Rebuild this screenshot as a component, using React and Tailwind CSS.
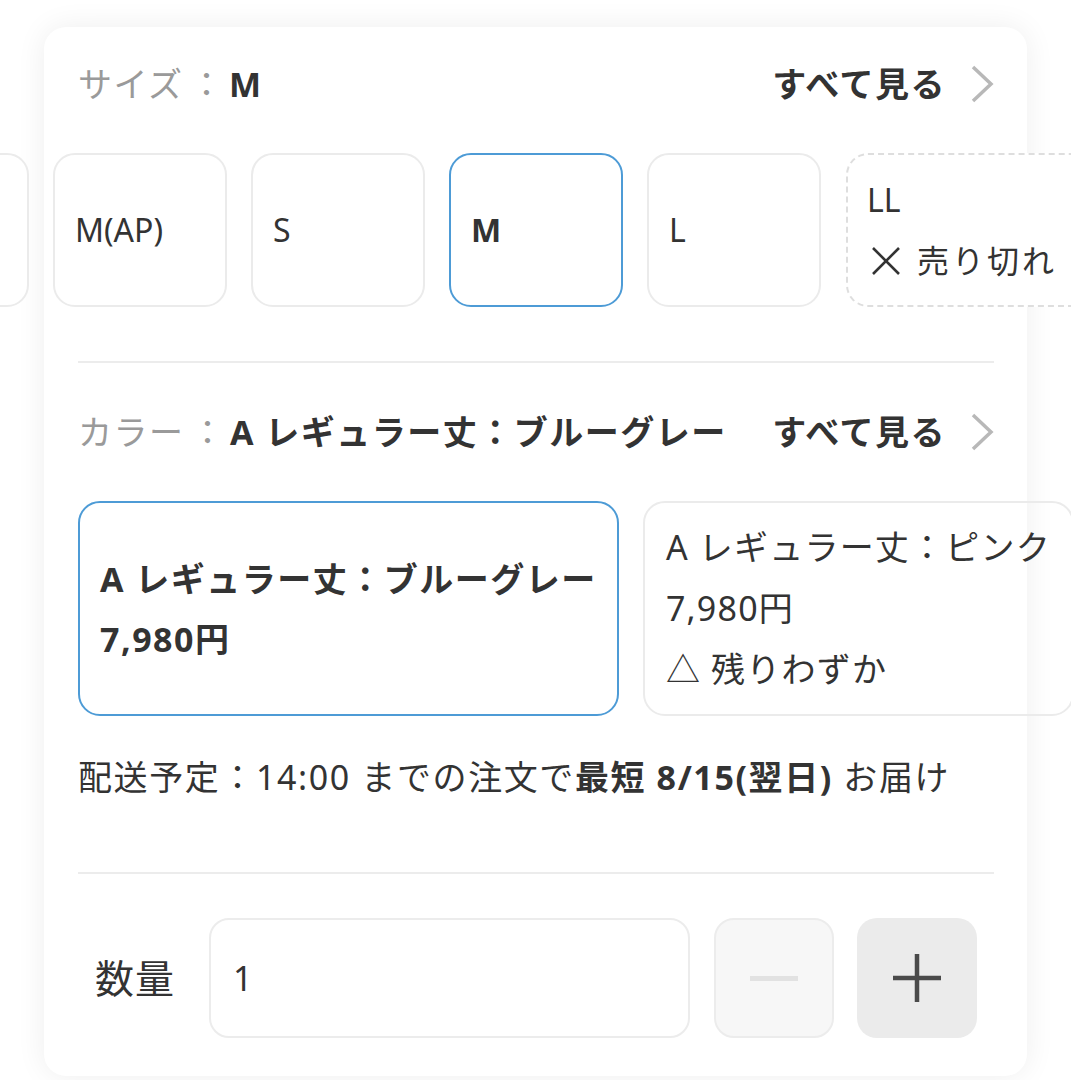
import React, { useState } from "react";

const sizes = [
  { label: "SS" },
  { label: "M(AP)" },
  { label: "S" },
  { label: "M" },
  { label: "L" },
];

const Chevron = () => (
  <svg width="24" height="38" viewBox="0 0 24 38" className="ml-[24px]">
    <polyline
      points="3,2 21,19 3,36"
      fill="none"
      stroke="#b8b8b8"
      strokeWidth="3.5"
    />
  </svg>
);

const SeeAll = () => (
  <div className="flex items-center font-bold text-[#333] tracking-[1.5px]">
    すべて見る
    <Chevron />
  </div>
);

const Cross = () => (
  <svg width="30" height="30" viewBox="0 0 30 30" className="mr-[16px] ml-[4px]">
    <path d="M2 2L28 28M28 2L2 28" stroke="#333" strokeWidth="2.6" />
  </svg>
);

export default function App() {
  const [size, setSize] = useState("M");
  const [qty, setQty] = useState(1);

  return (
    <div
      className="min-h-screen w-full overflow-hidden bg-white pt-[27px] pl-[44px]"
      style={{ fontFamily: '"Noto Sans", "Noto Sans CJK JP", sans-serif' }}
    >
      <div className="w-[983px] rounded-[22px] bg-white pl-[34px] pr-[33px] pt-[33px] pb-[38px] text-[34px] text-[#333] shadow-[0_0_30px_rgba(0,0,0,0.07)]">
        {/* Size header */}
        <div className="flex h-[48px] items-center justify-between">
          <div className="flex items-center tracking-[1.5px]">
            <span className="text-[#9a9a9a]">サイズ</span>
            <span className="ml-[6px] text-[#9a9a9a]">：</span>
            <span className="ml-[4px] font-bold">{size}</span>
          </div>
          <SeeAll />
        </div>

        {/* Size chips */}
        <div className="mt-[45px] -ml-[223px] flex w-max gap-[24px]">
          {sizes.map((s) => (
            <button
              key={s.label}
              onClick={() => setSize(s.label)}
              className={
                size === s.label
                  ? "flex h-[154px] w-[174px] items-center rounded-[22px] border-[2.5px] border-[#4d9bd6] bg-white pl-[20px] text-[32px] font-bold"
                  : "flex h-[154px] w-[174px] items-center rounded-[22px] border-2 border-[#ebebeb] bg-white pl-[20px] text-[32px]"
              }
            >
              {s.label}
            </button>
          ))}
          <div className="ml-[1px] flex h-[154px] w-[260px] flex-col justify-center rounded-[22px] border-2 border-dashed border-[#dedede] bg-white pl-[19px] text-[32px] leading-[61px]">
            <span>LL</span>
            <span className="flex items-center tracking-[3px]">
              <Cross />
              売り切れ
            </span>
          </div>
        </div>

        <div className="mt-[54px] h-[2px] bg-[#ececec]" />

        {/* Color header */}
        <div className="mt-[45px] flex h-[48px] items-center justify-between">
          <div className="flex items-center tracking-[1.5px]">
            <span className="text-[#9a9a9a]">カラー</span>
            <span className="ml-[6px] text-[#9a9a9a]">：</span>
            <span className="ml-[4px] font-bold">A レギュラー丈：ブルーグレー</span>
          </div>
          <SeeAll />
        </div>

        {/* Color cards */}
        <div className="mt-[45px] flex w-max gap-[24px]">
          <div className="flex h-[215px] flex-col justify-center rounded-[22px] border-[2.5px] border-[#4d9bd6] px-[20px] font-bold leading-[60px] tracking-[1.5px]">
            <span>A レギュラー丈：ブルーグレー</span>
            <span>7,980円</span>
          </div>
          <div className="flex h-[215px] flex-col justify-center rounded-[22px] border-2 border-[#ebebeb] px-[21px] leading-[61px] tracking-[1.2px]">
            <span>A レギュラー丈：ピンク</span>
            <span>7,980円</span>
            <span>△ 残りわずか</span>
          </div>
        </div>

        {/* Delivery */}
        <p className="mt-[37px] h-[48px] leading-[48px] tracking-[1.6px]">
          配送予定：14:00 までの注文で
          <span className="font-bold">最短 8/15(翌日)</span> お届け
        </p>

        <div className="mt-[71px] h-[2px] bg-[#ececec]" />

        {/* Quantity */}
        <div className="mt-[44px] flex h-[120px] items-center">
          <div className="w-[131px] pl-[17px] text-[39px] tracking-[1px]">数量</div>
          <div className="flex h-[120px] flex-1 items-center rounded-[20px] border-2 border-[#ececec] pl-[22px]">
            {qty}
          </div>
          <button
            onClick={() => setQty(Math.max(1, qty - 1))}
            className="ml-[24px] flex h-[120px] w-[120px] items-center justify-center rounded-[20px] border-2 border-[#ececec] bg-[#f7f7f7]"
          >
            <span className="block h-[5px] w-[48px] bg-[#e2e2e2]" />
          </button>
          <button
            onClick={() => setQty(qty + 1)}
            className="ml-[23px] mr-[17px] flex h-[120px] w-[120px] items-center justify-center rounded-[20px] bg-[#ebebeb]"
          >
            <svg width="50" height="50" viewBox="0 0 50 50">
              <path d="M25 1v48M1 25h48" stroke="#4a4a4a" strokeWidth="4.5" />
            </svg>
          </button>
        </div>
      </div>
    </div>
  );
}
